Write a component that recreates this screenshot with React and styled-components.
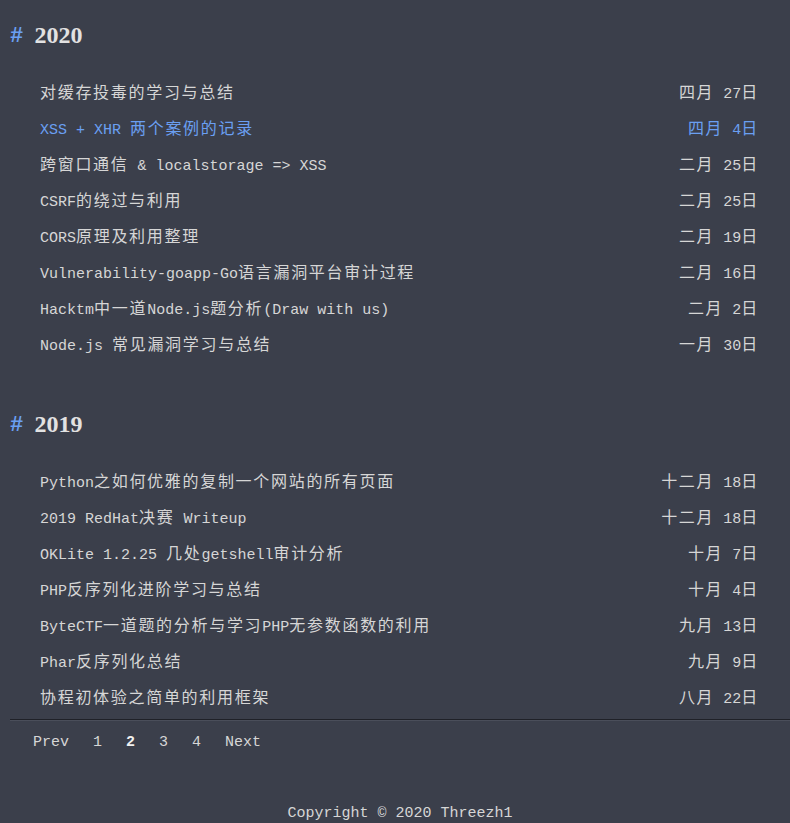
import React from 'react'
import styled, { createGlobalStyle } from 'styled-components'

const GlobalStyle = createGlobalStyle`
    html, body {
        margin: 0;
        padding: 0;
        background: #3b3f4b;
    }
    body {
        font-family: "Liberation Mono", "Noto Sans CJK SC", monospace;
        font-size: 15px;
        color: #d6d6d6;
    }
`

const posts = [
    {
        year: '2020',
        items: [
            { title: '对缓存投毒的学习与总结', date: '四月 27日' },
            { title: 'XSS + XHR 两个案例的记录', date: '四月 4日', active: true },
            { title: '跨窗口通信 & localstorage => XSS', date: '二月 25日' },
            { title: 'CSRF的绕过与利用', date: '二月 25日' },
            { title: 'CORS原理及利用整理', date: '二月 19日' },
            { title: 'Vulnerability-goapp-Go语言漏洞平台审计过程', date: '二月 16日' },
            { title: 'Hacktm中一道Node.js题分析(Draw with us)', date: '二月 2日' },
            { title: 'Node.js 常见漏洞学习与总结', date: '一月 30日' },
        ],
    },
    {
        year: '2019',
        items: [
            { title: 'Python之如何优雅的复制一个网站的所有页面', date: '十二月 18日' },
            { title: '2019 RedHat决赛 Writeup', date: '十二月 18日' },
            { title: 'OKLite 1.2.25 几处getshell审计分析', date: '十月 7日' },
            { title: 'PHP反序列化进阶学习与总结', date: '十月 4日' },
            { title: 'ByteCTF一道题的分析与学习PHP无参数函数的利用', date: '九月 13日' },
            { title: 'Phar反序列化总结', date: '九月 9日' },
            { title: '协程初体验之简单的利用框架', date: '八月 22日' },
        ],
    },
]

// CJK runs get their own span so they keep the wider glyph box of the original
const Mixed = ({ text }) => {
    const parts = text.split(/([\u3000-\u9fff\uff00-\uffef]+)/)
    return parts.map((p, i) =>
        /[\u3000-\u9fff\uff00-\uffef]/.test(p) ? <Cjk key={i}>{p}</Cjk> : <React.Fragment key={i}>{p}</React.Fragment>
    )
}

const App = () => {
    return (
        <>
            <GlobalStyle />
            <Page>
                {posts.map((section, idx) => (
                    <Section key={section.year} $first={idx === 0}>
                        <YearHeading>
                            <Hash># </Hash>
                            <Year>{section.year}</Year>
                        </YearHeading>
                        <PostList>
                            {section.items.map((item) => (
                                <PostRow key={item.title} $active={item.active}>
                                    <span><Mixed text={item.title} /></span>
                                    <span><Mixed text={item.date} /></span>
                                </PostRow>
                            ))}
                        </PostList>
                    </Section>
                ))}
                <Divider />
                <Pagination>
                    <PageLink>Prev</PageLink>
                    <PageLink>1</PageLink>
                    <PageLink $current>2</PageLink>
                    <PageLink>3</PageLink>
                    <PageLink>4</PageLink>
                    <PageLink>Next</PageLink>
                </Pagination>
                <Footer>Copyright © 2020 Threezh1</Footer>
            </Page>
        </>
    )
}

export default App

const Page = styled.div`
    padding: 20px 0 0 10px;
    display: flex;
    flex-direction: column;
`
const Section = styled.section`
    margin-top: ${(p) => (p.$first ? '0' : '48px')};
`
const YearHeading = styled.h2`
    margin: 0;
    height: 30px;
    line-height: 30px;
    display: flex;
    align-items: center;
    white-space: pre;
`
const Hash = styled.span`
    font-family: "Liberation Mono", monospace;
    font-size: 22px;
    font-weight: bold;
    color: #6a9ff2;
    margin-right: -2px;
    padding-top: 3px;
`
const Year = styled.span`
    font-family: "Liberation Serif", serif;
    font-size: 24px;
    font-weight: bold;
    color: #e2e2e2;
`
const PostList = styled.ul`
    list-style: none;
    margin: 23px 0 0;
    padding: 0 31px 0 30px;
`
const PostRow = styled.li`
    height: 36px;
    display: flex;
    align-items: center;
    justify-content: space-between;
    white-space: pre;
    color: ${(p) => (p.$active ? '#6a9ff2' : '#d6d6d6')};
`
const Cjk = styled.span`
    font-family: "Noto Sans CJK SC", sans-serif;
    font-size: 16px;
    letter-spacing: 1.7px;
`
const Divider = styled.hr`
    margin: 5px 0 0;
    border: none;
    border-top: 1px solid #1f2128;
    border-bottom: 1px solid #4a4e5a;
    height: 0;
`
const Pagination = styled.nav`
    display: flex;
    gap: 24px;
    padding-left: 23px;
    height: 42px;
    align-items: center;
`
const PageLink = styled.span`
    color: ${(p) => (p.$current ? '#f0f0f0' : '#d6d6d6')};
    font-weight: ${(p) => (p.$current ? 'bold' : 'normal')};
`
const Footer = styled.footer`
    margin-top: 40px;
    text-align: center;
    height: 22px;
    line-height: 22px;
`
